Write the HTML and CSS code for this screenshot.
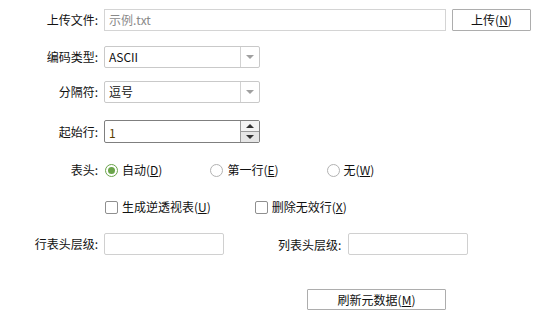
FILE: index.html
```html
<!DOCTYPE html>
<html lang="zh-CN">
<head>
    <meta charset="UTF-8">
    <title>导入数据</title>
    <link rel="stylesheet" href="styles.css">
</head>
<body>
    <div class="form">
        <div class="row row-file">
            <span class="label">上传文件:</span>
            <div class="box file-path">示例.txt</div>
            <div class="btn btn-upload">上传(<u>N</u>)</div>
        </div>

        <div class="row row-encoding">
            <span class="label">编码类型:</span>
            <div class="box combo">
                <span class="combo-value">ASCII</span>
                <span class="combo-arrow"><span class="tri-down"></span></span>
            </div>
        </div>

        <div class="row row-sep">
            <span class="label">分隔符:</span>
            <div class="box combo">
                <span class="combo-value">逗号</span>
                <span class="combo-arrow"><span class="tri-down"></span></span>
            </div>
        </div>

        <div class="row row-start">
            <span class="label">起始行:</span>
            <div class="box spinner">
                <span class="spinner-value">1</span>
                <span class="spinner-btns">
                    <span class="spin-btn"><span class="tri-up dark"></span></span>
                    <span class="spin-btn"><span class="tri-down dark"></span></span>
                </span>
            </div>
        </div>

        <div class="row row-header">
            <span class="label">表头:</span>
            <div class="options radios">
                <label class="option"><span class="radio checked"></span>自动(<u>D</u>)</label>
                <label class="option"><span class="radio"></span>第一行(<u>E</u>)</label>
                <label class="option"><span class="radio"></span>无(<u>W</u>)</label>
            </div>
        </div>

        <div class="row row-checks">
            <span class="label"></span>
            <div class="options checks">
                <label class="option"><span class="check"></span>生成逆透视表(<u>U</u>)</label>
                <label class="option"><span class="check"></span>删除无效行(<u>X</u>)</label>
            </div>
        </div>

        <div class="row row-levels">
            <span class="label">行表头层级:</span>
            <div class="box level-input"></div>
            <span class="label-inline">列表头层级:</span>
            <div class="box level-input"></div>
        </div>

        <div class="row row-refresh">
            <div class="btn btn-refresh">刷新元数据(<u>M</u>)</div>
        </div>
    </div>
</body>
</html>
```

FILE: styles.css
```css
body {
    margin: 0;
    background: #ffffff;
    font-family: "Noto Sans CJK SC", "Noto Sans", sans-serif;
    font-size: 12px;
    color: #111;
}

.form {
    padding-top: 9px;
}

.row {
    display: flex;
    align-items: center;
    height: 22px;
}

.label {
    width: 98px;
    flex: none;
    text-align: right;
    margin-right: 6px;
    line-height: 22px;
}

.box {
    box-sizing: border-box;
    height: 22px;
    border: 1px solid #d4d4d4;
    background: #fff;
    line-height: 20px;
}

u {
    text-decoration: underline;
    text-underline-offset: 1px;
}

/* upload row */
.file-path {
    width: 342px;
    padding-left: 4px;
    color: #8a8a8a;
}

.btn {
    box-sizing: border-box;
    height: 22px;
    border: 1px solid #adadad;
    border-radius: 1px;
    background: #fff;
    text-align: center;
    line-height: 20px;
    color: #111;
}

.btn-upload {
    width: 79px;
    margin-left: 6px;
}

/* combos */
.row-encoding {
    margin-top: 15px;
}

.row-sep {
    margin-top: 13px;
}

.combo {
    width: 156px;
    display: flex;
    border-color: #c9c9c9;
    border-radius: 2px;
}

.combo-value {
    flex: 1;
    padding-left: 4px;
}

.combo-arrow {
    width: 18px;
    border-left: 1px solid #d2d2d2;
    display: flex;
    align-items: center;
    justify-content: center;
}

.tri-down {
    width: 0;
    height: 0;
    border-left: 4px solid transparent;
    border-right: 4px solid transparent;
    border-top: 4px solid #a0a0a0;
}

.tri-up {
    width: 0;
    height: 0;
    border-left: 4px solid transparent;
    border-right: 4px solid transparent;
    border-bottom: 4px solid #a0a0a0;
}

.tri-down.dark {
    border-top-color: #333;
}

.tri-up.dark {
    border-bottom-color: #333;
}

/* spinner */
.row-start {
    margin-top: 17px;
    height: 23px;
}

.spinner {
    width: 156px;
    height: 23px;
    display: flex;
    border-color: #7f7f7f;
    border-radius: 2px;
}

.spinner-value {
    flex: 1;
    padding-left: 4px;
    line-height: 24px;
    color: #5a3d00;
}

.spinner-btns {
    width: 18px;
    border-left: 1px solid #9a9a9a;
    display: flex;
    flex-direction: column;
}

.spin-btn {
    flex: 1;
    display: flex;
    align-items: center;
    justify-content: center;
    background: #f4f4f4;
}

.spin-btn + .spin-btn {
    border-top: 1px solid #9a9a9a;
    background: #e6e6e6;
}

/* radios and checks */
.row-header {
    margin-top: 19px;
    height: 16px;
}

.row-checks {
    margin-top: 21px;
    height: 16px;
}

.options {
    display: flex;
    margin-left: 1px;
}

.radios {
    gap: 48px;
}

.checks {
    gap: 44px;
}

.option {
    display: flex;
    align-items: center;
    line-height: 16px;
}

.radio {
    box-sizing: border-box;
    width: 13px;
    height: 13px;
    border: 1px solid #b2b2b2;
    border-radius: 50%;
    margin-right: 4px;
    position: relative;
}

.radio.checked {
    border-color: #6aa44a;
}

.radio.checked::after {
    content: "";
    position: absolute;
    left: 2px;
    top: 2px;
    width: 7px;
    height: 7px;
    border-radius: 50%;
    background: #6aa44a;
}

.check {
    box-sizing: border-box;
    width: 13px;
    height: 13px;
    border: 1px solid #8f8f8f;
    border-radius: 2px;
    margin-right: 4px;
}

/* header levels */
.row-levels {
    margin-top: 18px;
}

.level-input {
    width: 120px;
    border-color: #d0d0d0;
    border-radius: 2px;
}

.label-inline {
    margin-left: 54px;
    margin-right: 7px;
}

/* refresh */
.row-refresh {
    margin-top: 34px;
    height: 21px;
}

.btn-refresh {
    width: 139px;
    height: 21px;
    line-height: 19px;
    margin-left: 307px;
}
```
